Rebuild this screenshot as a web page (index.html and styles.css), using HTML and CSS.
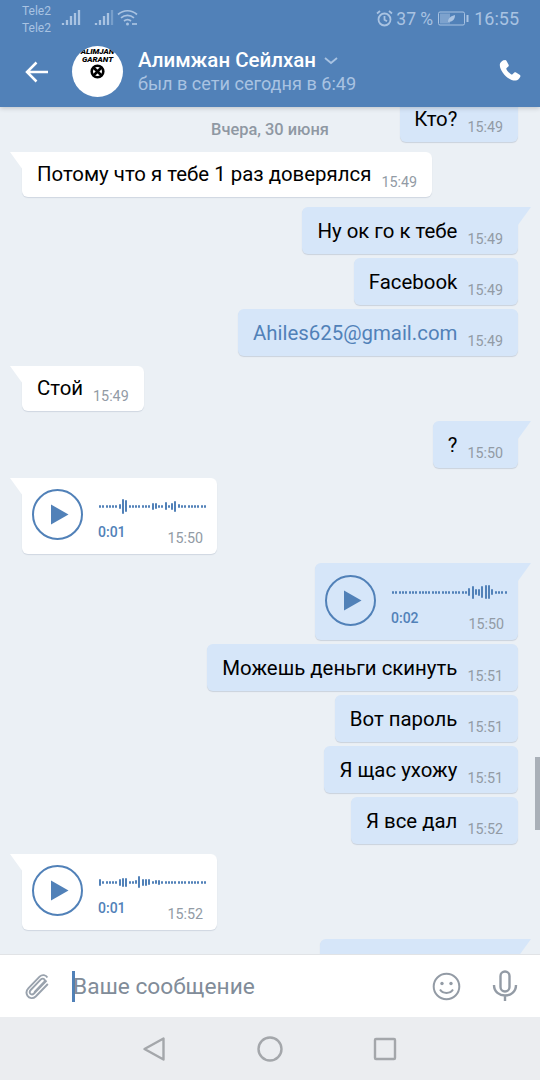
FILE: index.html
```html
<!DOCTYPE html>
<html>
  <head>
    <meta charset="utf-8">
    <meta name="viewport" content="width=device-width, initial-scale=1">
    <title>Алимжан Сейлхан</title>
    <link rel="stylesheet" href="styles.css">
  </head>
  <body>
    <div id="root">
      <header>
        <div class="status">
          <div class="carriers"><span>Tele2</span><span>Tele2</span></div>
          <svg class="signal" width="20" height="17" viewBox="0 0 20 17"><path d="M2 16v-2M6 16v-5M10 16v-9M14 16v-12M18 16v-15" /></svg>
          <svg class="signal second" width="20" height="17" viewBox="0 0 20 17"><path d="M2 16v-2M6 16v-5M10 16v-9M14 16v-12" /><path class="dim" d="M18 16v-15" /></svg>
          <svg class="wifi" width="21" height="17" viewBox="0 0 21 17"><path d="M1 5.500c5.500-5 13.500-5 19 0M4 8.800c3.800-3.300 9.200-3.300 13 0M7 12c2-1.600 5-1.600 7 0" /><circle cx="10.500" cy="15" r="1.500" /><path d="M15 15h5" /></svg>
          <div class="status-right">
            <svg class="alarm" width="17" height="17" viewBox="0 0 17 17"><circle cx="8.500" cy="9.500" r="6" /><path d="M8.500 6v3.800l2.500 1.500M1 3.500l3-2.500M16 3.500l-3-2.500" /></svg>
            <span class="percent">37 %</span>
            <svg class="battery" width="31" height="15" viewBox="0 0 31 15"><rect x="0.500" y="1" width="26" height="13" rx="1.500" /><rect class="fill" x="2" y="2.500" width="10" height="10" /><path class="leaf" d="M10 11c0-4 3-6 7-7 0 4-2 7-7 7z" /><rect class="cap" x="28.500" y="4" width="2" height="7" /></svg>
            <span class="clock">16:55</span>
          </div>
        </div>
        <div class="toolbar">
          <svg class="back" width="24" height="22" viewBox="0 0 24 22"><path d="M23 11h-21M11.500 1.500l-9.500 9.500 9.500 9.500" /></svg>
          <div class="avatar">
            <span class="avatar-name">ALIMJAN<br>GARANT</span>
            <svg width="15" height="15" viewBox="0 0 15 15"><circle cx="7.500" cy="7.500" r="5.800" /><path d="M4 11l7-7M4 4l7 7" /></svg>
          </div>
          <div class="peer">
            <div class="peer-name">Алимжан Сейлхан <svg width="14" height="8" viewBox="0 0 14 8"><path d="M1 1l6 5 6-5" /></svg></div>
            <div class="peer-seen">был в сети сегодня в 6:49</div>
          </div>
          <svg class="phone" width="26" height="26" viewBox="0 0 24 24"><path d="M6.800 1.200c.7-.4 1.500-.2 1.900.5l2 3.500c.3.600.2 1.300-.3 1.800l-1.500 1.300c-.3.300-.4.700-.2 1.100.9 1.900 2.500 3.600 4.500 4.800.4.200.8.200 1.100-.1l1.500-1.400c.5-.5 1.200-.5 1.800-.2l3.300 2c.7.400.9 1.300.5 2-.9 1.700-2.400 3.300-4.200 3.400-6.800.3-15-8.800-14.600-14.800.2-1.700 1.300-2.500 3.200-3.900z" /></svg>
        </div>
      </header>

      <main>
        <div class="date">Вчера, 30 июня</div>
        <div class="scrollbar"></div>
        <div class="list">
          <div class="msg out first"><span class="text">Кто?</span><span class="time">15:49</span></div>
          <div class="msg in tail"><span class="text">Потому что я тебе 1 раз доверялся</span><span class="time">15:49</span></div>
          <div class="msg out tail"><span class="text">Ну ок го к тебе</span><span class="time">15:49</span></div>
          <div class="msg out next"><span class="text">Facebook</span><span class="time">15:49</span></div>
          <div class="msg out next"><span class="text link">Ahiles625@gmail.com</span><span class="time">15:49</span></div>
          <div class="msg in tail"><span class="text">Стой</span><span class="time">15:49</span></div>
          <div class="msg out tail"><span class="text">?</span><span class="time">15:50</span></div>

          <div class="msg in tail voice">
            <svg class="play" width="51" height="51" viewBox="0 0 51 51"><circle cx="25.500" cy="25.500" r="24.500" /><path d="M19 15.500l17.500 10-17.500 10z" /></svg>
            <div class="voice-body">
              <div class="wave" data-bars="2 2 2 2 2 3 5 15 12 2 2 2 2 2 3 2 7 6 2 3 8 3 7 11 4 2 2 2 2 2 2 2 2"></div>
              <div class="voice-foot"><span class="duration">0:01</span><span class="time">15:50</span></div>
            </div>
          </div>

          <div class="msg out tail voice">
            <svg class="play" width="51" height="51" viewBox="0 0 51 51"><circle cx="25.500" cy="25.500" r="24.500" /><path d="M19 15.500l17.500 10-17.500 10z" /></svg>
            <div class="voice-body">
              <div class="wave" data-bars="2 2 2 2 2 2 2 2 2 2 2 2 2 2 2 2 2 2 2 2 2 2 2 8 13 6 7 12 14 14 6 2 2 2 2"></div>
              <div class="voice-foot"><span class="duration">0:02</span><span class="time">15:50</span></div>
            </div>
          </div>

          <div class="msg out next"><span class="text">Можешь деньги скинуть</span><span class="time">15:51</span></div>
          <div class="msg out next"><span class="text">Вот пароль</span><span class="time">15:51</span></div>
          <div class="msg out next"><span class="text">Я щас ухожу</span><span class="time">15:51</span></div>
          <div class="msg out next"><span class="text">Я все дал</span><span class="time">15:52</span></div>

          <div class="msg in tail voice">
            <svg class="play" width="51" height="51" viewBox="0 0 51 51"><circle cx="25.500" cy="25.500" r="24.500" /><path d="M19 15.500l17.500 10-17.500 10z" /></svg>
            <div class="voice-body">
              <div class="wave" data-bars="7 2 2 2 2 3 7 9 9 3 3 4 12 7 7 6 3 4 5 2 2 2 2 2 2 2 2 2 2 2 2 2 2"></div>
              <div class="voice-foot"><span class="duration">0:01</span><span class="time">15:52</span></div>
            </div>
          </div>

          <div class="msg out tail last"></div>
        </div>
      </main>

      <div class="composer">
        <svg class="attach" width="26" height="28" viewBox="0 0 30 32"><path d="M26 8.500l-14.500 15c-1.800 1.800-4.300 1.300-4.800-.7-.3-1.200 0-2.300 1-3.300l11.800-12.200c1.500-1.500 3.500-1.200 4.200.2.500 1 .2 2-.7 3l-11 11.500M27 5c-1.800-3-6-3.800-9-1l-12.800 13.300c-2.500 2.600-3 5.800-1.200 8.700 2 3.300 6.500 3.800 9.500 1l14-14.500" /></svg>
        <div class="field"><span class="caret"></span><span class="placeholder">Ваше сообщение</span></div>
        <svg class="smile" width="29" height="29" viewBox="0 0 29 29"><circle cx="14.500" cy="14.500" r="12.800" /><circle class="eye" cx="10" cy="11.500" r="1.700" /><circle class="eye" cx="19" cy="11.500" r="1.700" /><path d="M8 17.500c2.800 4.500 10.200 4.500 13 0" /></svg>
        <svg class="mic" width="26" height="32" viewBox="0 0 26 32"><rect x="8.500" y="1.500" width="9" height="20" rx="4.500" /><path d="M2 15c0 14 22 14 22 0M13 25v6" /></svg>
      </div>

      <nav>
        <svg width="24" height="26" viewBox="0 0 24 26"><path d="M21.500 2.500v21l-19-10.500z" /></svg>
        <svg width="26" height="26" viewBox="0 0 26 26"><circle cx="13" cy="13" r="11.500" /></svg>
        <svg width="24" height="24" viewBox="0 0 24 24"><rect x="2" y="2" width="20" height="20" rx="1" /></svg>
      </nav>
    </div>
    <script src="wave.js"></script>
  </body>
</html>
```

FILE: styles.css
```css
body, html { margin: 0; padding: 0; height: 100%; font-family: Roboto, "Noto Sans", sans-serif; }
#root { display: flex; flex-direction: column; height: 1080px; width: 540px; overflow: hidden; background-color: #ebf0f5; }
svg { display: block; fill: none; }

/* header */
header { height: 107px; flex: none; background-color: #5181b8; position: relative; z-index: 2; box-shadow: 0 1px 5px rgba(0,0,0,0.2); }
.status { height: 37px; display: flex; align-items: flex-start; padding: 0 21px 0 22px; color: #a9c3e2; }
.carriers { display: flex; flex-direction: column; width: 39px; padding-top: 3px; font-size: 12px; line-height: 16.500px; }
.signal { margin-top: 9px; stroke: #a9c3e2; stroke-width: 2.300; }
.signal .dim { opacity: 0.45; }
.signal.second { margin-left: 13px; }
.wifi { margin: 9px 0 0 3px; stroke: #a9c3e2; stroke-width: 1.700; }
.wifi circle { fill: #a9c3e2; stroke: none; }
.status-right { margin-left: auto; display: flex; align-items: center; height: 37px; }
.alarm { stroke: #a9c3e2; stroke-width: 1.800; margin-right: 3px; }
.percent { font-size: 17.500px; margin-right: 5px; }
.battery { margin-right: 5px; }
.battery rect { stroke: #a9c3e2; }
.battery .fill { fill: #a9c3e2; stroke: none; opacity: 0.5; }
.battery .leaf { fill: #a9c3e2; }
.battery .cap { fill: #a9c3e2; stroke: none; }
.clock { font-size: 18px; }
.toolbar { display: flex; align-items: center; height: 71px; padding-left: 25px; margin-top: -1px; }
.back { stroke: #fff; stroke-width: 2.500; }
.avatar { width: 51px; height: 51px; margin-left: 23px; border-radius: 50%; background-color: #fff; overflow: hidden; display: flex; flex-direction: column; align-items: center; color: #000; }
.avatar-name { font-size: 8px; font-weight: 900; font-style: italic; line-height: 8px; text-align: center; margin-top: 2px; white-space: nowrap; }
.avatar svg { stroke: #000; stroke-width: 2.600; }
.peer { margin-left: 15px; }
.peer-name { display: flex; align-items: center; gap: 8px; font-size: 20.500px; font-weight: 500; line-height: 23px; color: #fff; }
.peer-name svg { stroke: #a9c3e2; stroke-width: 1.800; margin-top: 1px; }
.peer-seen { font-size: 18.100px; line-height: 23px; color: #a9c3e2; }
.phone { margin-left: auto; margin-right: 17px; fill: #fff; }

/* messages */
main { flex: 1; position: relative; overflow: hidden; }
.date { position: absolute; left: 0; right: 0; top: 14px; text-align: center; font-size: 16.400px; font-weight: 500; line-height: 17px; color: #8f98a3; }
.scrollbar { position: absolute; right: 0; top: 650px; width: 5px; height: 73px; background-color: #a9b0b8; }
.list { display: flex; flex-direction: column; margin-top: -12px; }
.msg { position: relative; display: flex; align-items: flex-end; box-sizing: border-box; border-radius: 6px; padding: 0 15px; margin-top: 10px; }
.msg .text { font-size: 20.400px; line-height: 45px; color: #000; margin-right: 10px; white-space: nowrap; }
.msg .time { font-size: 14.300px; line-height: 17px; color: #929ba5; padding-bottom: 6px; }
.msg .link { color: #5181b8; }
.in { align-self: flex-start; margin-left: 22px; height: 45px; background-color: #fff; box-shadow: 0 1px 1px rgba(0,30,70,0.12); }
.out { align-self: flex-end; margin-right: 22px; height: 47px; background-color: #d6e6f9; box-shadow: 0 1px 1px rgba(0,30,70,0.14); }
.in.tail { border-top-left-radius: 0; }
.out.tail { border-top-right-radius: 0; }
.in.tail::before, .out.tail::before { content: ""; position: absolute; top: 0; width: 13px; height: 18px; }
.in.tail::before { left: -12px; background-color: #fff; clip-path: polygon(0 0, 100% 0, 100% 100%); }
.out.tail::before { right: -13px; background-color: #d6e6f9; clip-path: polygon(0 0, 100% 0, 0 100%); }
.msg.next { margin-top: 4px; }
.msg.first { margin-top: 0; padding-left: 14px; }
.msg.last { width: 198px; height: 60px; margin-top: 9px; }

/* voice messages */
.voice { align-items: flex-start; padding: 0 11px 0 10px; }
.in.voice { height: 76px; }
.out.voice { height: 77px; margin-top: 9px; }
.play { margin-top: 11px; }
.out .play { margin-top: 12px; }
.play circle { stroke: #5181b8; stroke-width: 2; }
.play path { fill: #5181b8; }
.voice-body { width: 107px; margin-left: 16px; display: flex; flex-direction: column; }
.out .voice-body { width: 115px; }
.wave { display: flex; align-items: center; justify-content: space-between; height: 16px; margin-top: 20px; }
.out .wave { margin-top: 21px; }
.wave span { display: block; width: 2px; min-height: 3px; border-radius: 1px; background-color: #5181b8; }
.voice-foot { display: flex; justify-content: space-between; align-items: flex-end; margin-top: 10px; }
.duration { font-size: 14px; font-weight: 500; line-height: 17px; color: #5181b8; margin: -2px 0 0 -1px; }
.voice .time { padding-bottom: 0; margin-right: 3px; position: relative; top: 6px; }

/* composer */
.composer { height: 63px; flex: none; box-sizing: border-box; display: flex; align-items: center; background-color: #fff; border-top: 1px solid #e1e3e6; position: relative; z-index: 2; padding-left: 24px; }
.attach { stroke: #99a2ad; stroke-width: 2.200; margin-top: 2px; }
.field { flex: 1; display: flex; align-items: center; margin-left: 22px; }
.caret { width: 3px; height: 31px; background-color: #5181b8; margin-right: -2px; }
.placeholder { font-size: 22.700px; color: #818c99; white-space: nowrap; }
.smile { stroke: #939ba5; stroke-width: 2; margin-right: 31px; }
.smile .eye { fill: #939ba5; stroke: none; }
.mic { stroke: #939ba5; stroke-width: 2.400; margin-right: 22px; }

/* android nav */
nav { height: 63px; flex: none; display: flex; align-items: center; background-color: #ebedf0; padding-left: 142px; }
nav svg { stroke: #a4a7ab; stroke-width: 2.400; stroke-linejoin: round; }
nav svg:nth-child(2) { margin-left: 91px; }
nav svg:nth-child(3) { margin-left: 90px; }
```

FILE: wave.js
```js
// Build waveform bars from data-bars
document.querySelectorAll('.wave').forEach(wave => {
  wave.dataset.bars.split(' ').forEach(h => {
    const bar = document.createElement('span');
    bar.style.height = h + 'px';
    wave.appendChild(bar);
  });
});
```
